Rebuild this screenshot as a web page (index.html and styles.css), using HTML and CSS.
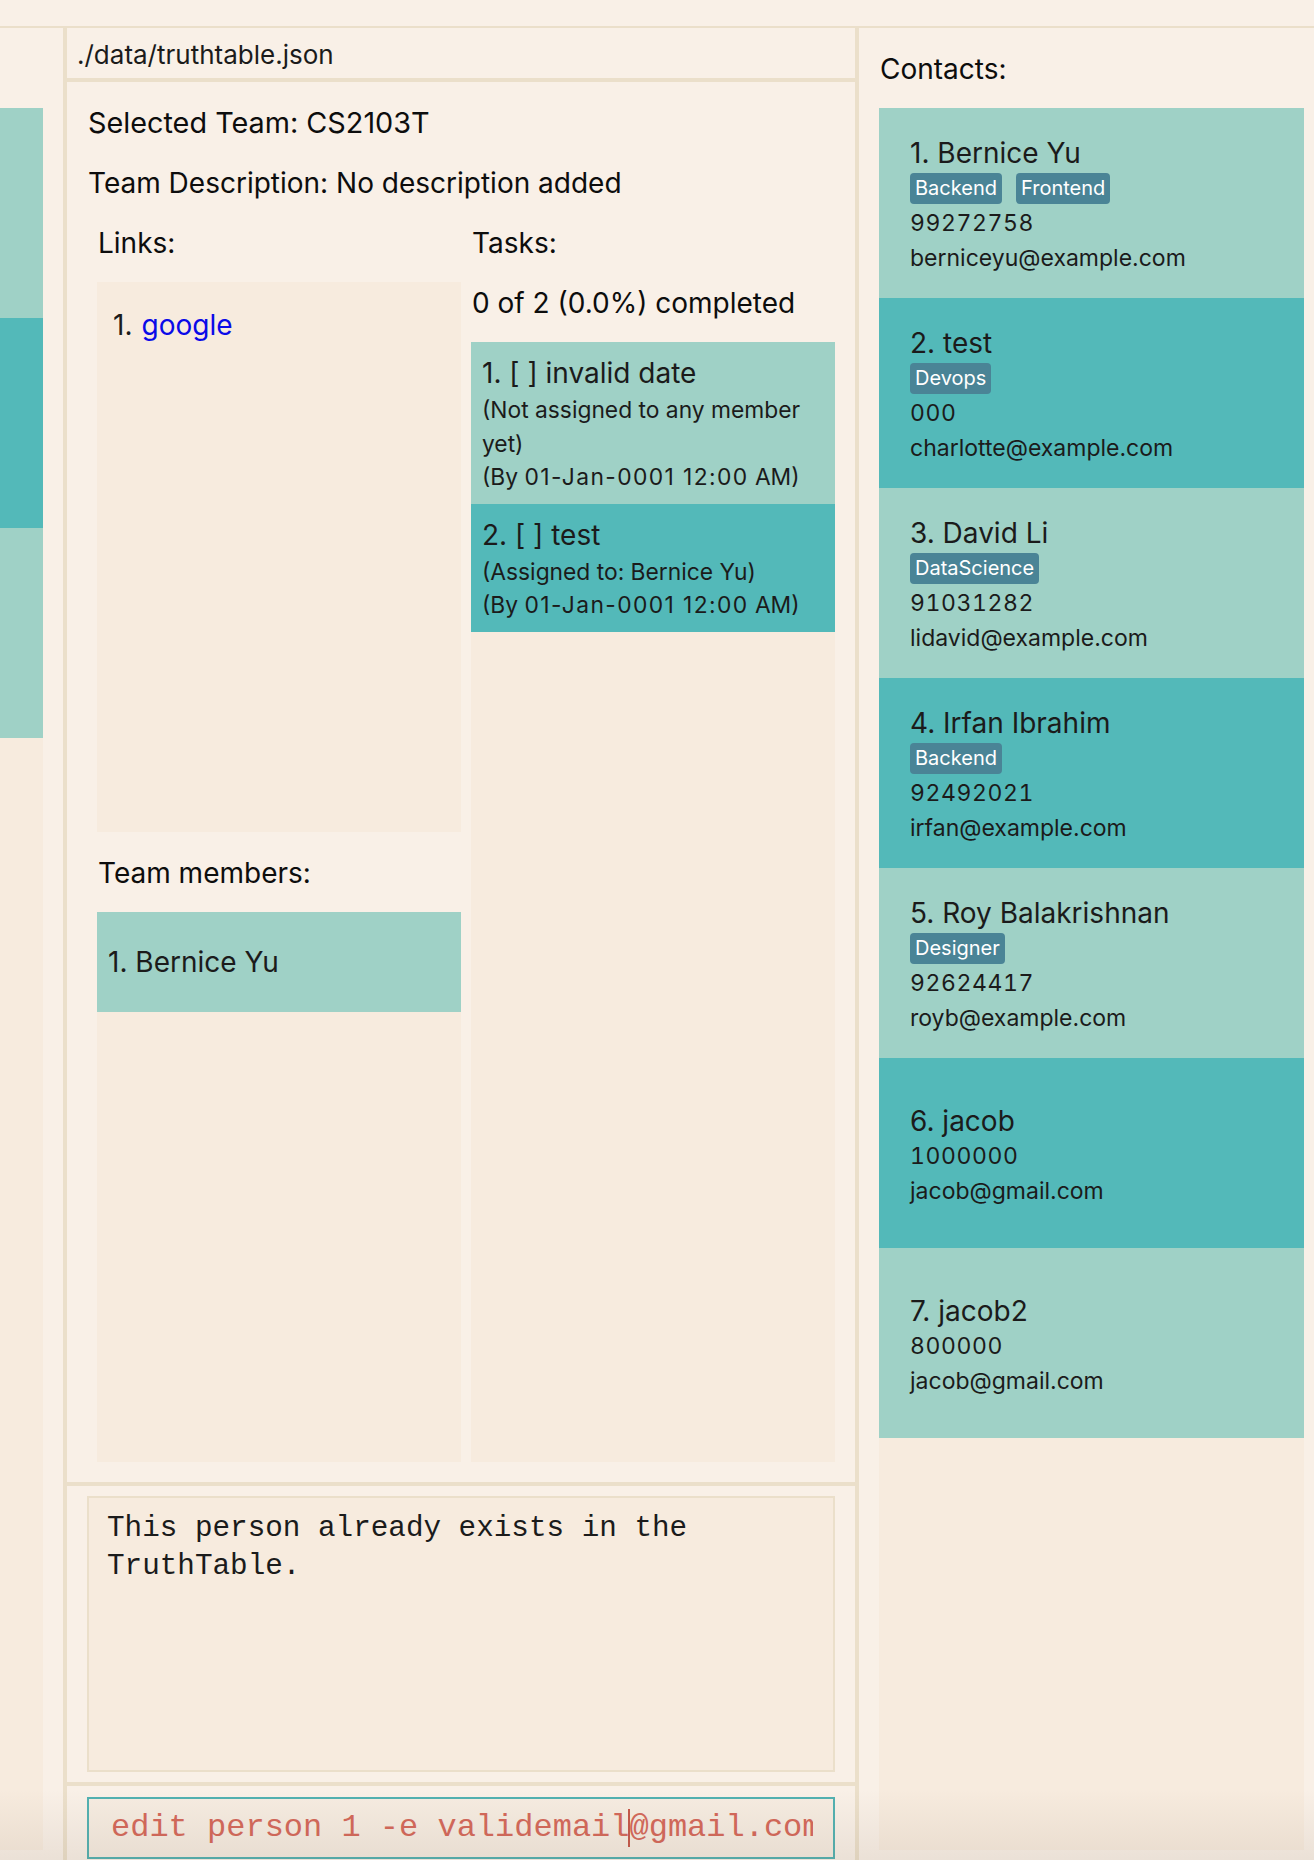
FILE: index.html
```html
<!DOCTYPE html>
<html lang="en">
<head>
<meta charset="utf-8">
<title>TruthTable</title>
<link rel="stylesheet" href="styles.css">
</head>
<body>
<div class="app">
  <div class="menubar"></div>
  <div class="main">
    <aside class="teams">
      <div class="teams-list">
        <div class="team-card light"></div>
        <div class="team-card dark"></div>
        <div class="team-card light"></div>
      </div>
    </aside>
    <div class="vdiv"></div>
    <section class="center">
      <div class="path-bar">./data/truthtable.json</div>
      <div class="team-panel">
        <div class="team-line first">Selected Team: CS2103T</div>
        <div class="team-line">Team Description: No description added</div>
        <div class="team-grid">
          <div class="col">
            <div class="label">Links:</div>
            <div class="list links-list">
              <div class="link-cell">1. <span class="link">google</span></div>
            </div>
            <div class="label members-label">Team members:</div>
            <div class="list members-list">
              <div class="member-cell light">1. Bernice Yu</div>
            </div>
          </div>
          <div class="col">
            <div class="label">Tasks:</div>
            <div class="progress">0 of 2 (0.0%) completed</div>
            <div class="list tasks-list">
              <div class="task-card light">
                <div class="task-title">1. [ ] invalid date</div>
                <div class="task-sub">(Not assigned to any member yet)</div>
                <div class="task-sub">(By <span class="num">01-Jan-0001 12:00</span> AM)</div>
              </div>
              <div class="task-card dark">
                <div class="task-title">2. [ ] test</div>
                <div class="task-sub">(Assigned to: Bernice Yu)</div>
                <div class="task-sub">(By <span class="num">01-Jan-0001 12:00</span> AM)</div>
              </div>
            </div>
          </div>
        </div>
      </div>
      <div class="result-area">
        <div class="result-box">This person already exists in the<br>TruthTable.</div>
      </div>
      <div class="command-area">
        <div class="command-box"><div class="command-clip"><span class="command-text">edit person 1 -e validemail</span><span class="caret"></span><span class="command-text">@gmail.com</span></div></div>
      </div>
    </section>
    <div class="vdiv"></div>
    <section class="contacts">
      <div class="contacts-title">Contacts:</div>
      <div class="contacts-list">
        <div class="contact-card light">
          <div class="c-name">1. Bernice Yu</div>
          <div class="tags"><span class="tag">Backend</span><span class="tag">Frontend</span></div>
          <div class="c-info phone">99272758</div>
          <div class="c-info">berniceyu@example.com</div>
        </div>
        <div class="contact-card dark">
          <div class="c-name">2. test</div>
          <div class="tags"><span class="tag">Devops</span></div>
          <div class="c-info phone">000</div>
          <div class="c-info">charlotte@example.com</div>
        </div>
        <div class="contact-card light">
          <div class="c-name">3. David Li</div>
          <div class="tags"><span class="tag">DataScience</span></div>
          <div class="c-info phone">91031282</div>
          <div class="c-info">lidavid@example.com</div>
        </div>
        <div class="contact-card dark">
          <div class="c-name">4. Irfan Ibrahim</div>
          <div class="tags"><span class="tag">Backend</span></div>
          <div class="c-info phone">92492021</div>
          <div class="c-info">irfan@example.com</div>
        </div>
        <div class="contact-card light">
          <div class="c-name">5. Roy Balakrishnan</div>
          <div class="tags"><span class="tag">Designer</span></div>
          <div class="c-info phone">92624417</div>
          <div class="c-info">royb@example.com</div>
        </div>
        <div class="contact-card dark">
          <div class="c-name">6. jacob</div>
          <div class="c-info phone">1000000</div>
          <div class="c-info">jacob@gmail.com</div>
        </div>
        <div class="contact-card light">
          <div class="c-name">7. jacob2</div>
          <div class="c-info phone">800000</div>
          <div class="c-info">jacob@gmail.com</div>
        </div>
      </div>
    </section>
  </div>
  <div class="bottom-shade"></div>
</div>
</body>
</html>
```

FILE: styles.css
```css
* { box-sizing: border-box; }

html, body {
  margin: 0;
  padding: 0;
}

body {
  background: #f9f0e7;
  font-family: Inter, "Noto Sans", sans-serif;
  color: #141414;
  width: 1314px;
  height: 1860px;
  overflow: hidden;
}

.app {
  position: relative;
  width: 1314px;
  height: 1860px;
  display: flex;
  flex-direction: column;
}

.menubar {
  height: 28px;
  border-bottom: 2px solid #ebdfca;
  flex: none;
}

.main {
  flex: 1;
  display: flex;
  min-height: 0;
}

.vdiv {
  width: 4px;
  background: #ebdfca;
  flex: none;
}

/* left team strip */
.teams {
  width: 63px;
  flex: none;
  padding: 80px 20px 10px 0;
  display: flex;
}

.teams-list {
  flex: 1;
  background: #f7ebde;
}

.team-card { height: 210px; }

.light { background: #9fd1c6; }
.dark { background: #53b9b9; }

/* center */
.center {
  width: 788px;
  flex: none;
  display: flex;
  flex-direction: column;
}

.path-bar {
  height: 54px;
  border-bottom: 4px solid #ebdfca;
  padding: 10px 0 0 10px;
  font-size: 26px;
  line-height: 34px;
  color: #1b1b1b;
}

.team-panel {
  height: 1404px;
  border-bottom: 4px solid #ebdfca;
  padding: 23px 20px 20px 21px;
  display: flex;
  flex-direction: column;
}

.team-line {
  font-size: 28px;
  line-height: 36px;
  margin-bottom: 24px;
  color: #0d0d0d;
}

.team-line.first { font-size: 28.8px; }

.team-grid {
  flex: 1;
  display: grid;
  grid-template-columns: 364px 364px;
  column-gap: 10px;
  padding-left: 9px;
  min-height: 0;
}

.col {
  display: flex;
  flex-direction: column;
  min-height: 0;
}

.label {
  font-size: 28px;
  line-height: 36px;
  padding-left: 1px;
  color: #0d0d0d;
  margin-bottom: 21px;
}

.members-label { margin-top: 23px; }

.list {
  background: #f7ebde;
  flex: 1;
  min-height: 0;
}

.link-cell {
  height: 86px;
  display: flex;
  align-items: center;
  padding-left: 16px;
  font-size: 28px;
  color: #1b1b1b;
}

.link { color: #0a0ae8; margin-left: 9px; }

.member-cell {
  height: 100px;
  display: flex;
  align-items: center;
  padding-left: 11px;
  font-size: 28px;
  color: #1b1b1b;
}

.progress {
  font-size: 28px;
  line-height: 36px;
  margin: 3px 0 21px 1px;
  color: #0d0d0d;
}

.task-card {
  padding: 13px 10px 10px 11px;
  color: #1b1b1b;
}

.task-title {
  font-size: 28px;
  line-height: 36px;
  margin-bottom: 2px;
}

.task-sub {
  font-size: 22.8px;
  line-height: 33.5px;
}

.num {
  letter-spacing: 1.4px;
}

/* result & command */
.result-area {
  height: 300px;
  border-bottom: 4px solid #ebdfca;
  padding: 10px 20px 10px 20px;
  display: flex;
}

.result-box {
  flex: 1;
  border: 2px solid #ebdfca;
  background: #f7ebde;
  padding: 12px 18px;
  font-family: "Liberation Mono", "Courier New", monospace;
  font-size: 29.3px;
  line-height: 38px;
  color: #1b1b1b;
}

.command-area {
  flex: 1;
  padding: 11px 20px 0 20px;
}

.command-box {
  height: 62px;
  border: 2px solid #52b1b1;
  background: #f6ece1;
  padding: 0 20px 0 22px;
  display: flex;
  align-items: center;
}

.command-clip {
  flex: 1;
  overflow: hidden;
  white-space: nowrap;
  display: flex;
  align-items: center;
}

.command-text {
  font-family: "Liberation Mono", "Courier New", monospace;
  font-size: 32px;
  line-height: 38px;
  color: #d4685a;
  flex: none;
}

.caret {
  width: 2px;
  height: 38px;
  background: #c5584a;
  flex: none;
  margin: 0 -1px;
}

/* contacts */
.contacts {
  flex: 1;
  display: flex;
  flex-direction: column;
  padding: 22px 10px 10px 20px;
}

.contacts-title {
  font-size: 28px;
  line-height: 36px;
  margin: 1px 0 21px 1px;
  color: #0d0d0d;
}

.contacts-list {
  flex: 1;
  background: #f7ebde;
}

.contact-card {
  height: 190px;
  padding: 5px 0 0 31px;
  display: flex;
  flex-direction: column;
  justify-content: center;
  color: #1b1b1b;
}

.c-name {
  font-size: 28px;
  line-height: 36px;
}

.tags {
  display: flex;
  gap: 14px;
  margin: 2px 0;
}

.tag {
  height: 31px;
  line-height: 31px;
  padding: 0 5px;
  background: #4a8496;
  color: #fff;
  font-size: 20px;
  border-radius: 4px;
}

.c-info {
  font-size: 23px;
  line-height: 35px;
}

.c-info.phone {
  font-feature-settings: "tnum";
  letter-spacing: 0.6px;
}

.bottom-shade {
  position: absolute;
  left: 0;
  right: 0;
  bottom: 0;
  height: 70px;
  background: linear-gradient(to bottom, rgba(120, 90, 60, 0), rgba(110, 90, 70, 0.1));
  pointer-events: none;
}
```
